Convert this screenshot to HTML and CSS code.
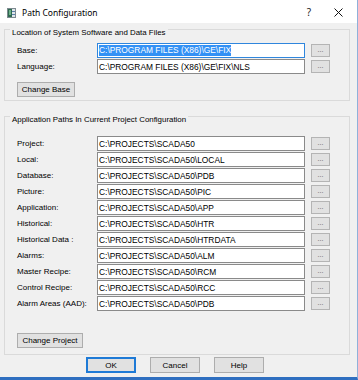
FILE: index.html
```html
<!DOCTYPE html>
<html>
<head>
<meta charset="utf-8">
<link rel="stylesheet" href="styles.css">
</head>
<body>
<div class="window">
  <div class="titlebar">
    <span class="app-icon">
      <svg width="9" height="10" viewBox="0 0 9 10">
        <rect x="0.5" y="0.5" width="8" height="9" fill="#dfe6ea" stroke="#7d8a90"/>
        <rect x="1" y="1" width="4" height="8" fill="#2f6a50"/>
        <rect x="2" y="2" width="2" height="5" fill="#6fb08a"/>
        <rect x="5" y="3" width="3" height="1" fill="#5a7fa8"/>
        <rect x="5" y="6" width="3" height="1" fill="#5a7fa8"/>
      </svg>
    </span>
    <span class="title">Path Configuration</span>
    <span class="tb-help">?</span>
    <span class="tb-close">
      <svg width="9" height="9" viewBox="0 0 9 9">
        <path d="M0.5 0.5 L8.5 8.5 M8.5 0.5 L0.5 8.5" stroke="#111" stroke-width="1" fill="none"/>
      </svg>
    </span>
  </div>
  <div class="body">
    <fieldset class="group group-system">
      <legend>Location of System Software and Data Files</legend>
      <div class="group-content">
        <div class="rows rows-system">
          <div class="row"><span class="lbl">Base:</span><div class="field focus"><span class="sel">C:\PROGRAM FILES (X86)\GE\FIX</span></div><button class="browse">...</button></div>
          <div class="row"><span class="lbl">Language:</span><div class="field">C:\PROGRAM FILES (X86)\GE\FIX\NLS</div><button class="browse">...</button></div>
        </div>
        <button class="btn change-base">Change Base</button>
      </div>
    </fieldset>
    <fieldset class="group group-project">
      <legend>Application Paths In Current Project Configuration</legend>
      <div class="group-content">
        <div class="rows rows-project">
          <div class="row"><span class="lbl">Project:</span><div class="field">C:\PROJECTS\SCADA50</div><button class="browse">...</button></div>
          <div class="row"><span class="lbl">Local:</span><div class="field">C:\PROJECTS\SCADA50\LOCAL</div><button class="browse">...</button></div>
          <div class="row"><span class="lbl">Database:</span><div class="field">C:\PROJECTS\SCADA50\PDB</div><button class="browse">...</button></div>
          <div class="row"><span class="lbl">Picture:</span><div class="field">C:\PROJECTS\SCADA50\PIC</div><button class="browse">...</button></div>
          <div class="row"><span class="lbl">Application:</span><div class="field">C:\PROJECTS\SCADA50\APP</div><button class="browse">...</button></div>
          <div class="row"><span class="lbl">Historical:</span><div class="field">C:\PROJECTS\SCADA50\HTR</div><button class="browse">...</button></div>
          <div class="row"><span class="lbl">Historical Data :</span><div class="field">C:\PROJECTS\SCADA50\HTRDATA</div><button class="browse">...</button></div>
          <div class="row"><span class="lbl">Alarms:</span><div class="field">C:\PROJECTS\SCADA50\ALM</div><button class="browse">...</button></div>
          <div class="row"><span class="lbl">Master Recipe:</span><div class="field">C:\PROJECTS\SCADA50\RCM</div><button class="browse">...</button></div>
          <div class="row"><span class="lbl">Control Recipe:</span><div class="field">C:\PROJECTS\SCADA50\RCC</div><button class="browse">...</button></div>
          <div class="row"><span class="lbl">Alarm Areas (AAD):</span><div class="field">C:\PROJECTS\SCADA50\PDB</div><button class="browse">...</button></div>
        </div>
        <button class="btn change-project">Change Project</button>
      </div>
    </fieldset>
    <div class="actions">
      <button class="btn action default">OK</button>
      <button class="btn action">Cancel</button>
      <button class="btn action">Help</button>
    </div>
  </div>
</div>
</body>
</html>
```

FILE: styles.css
```css
* { box-sizing: border-box; }

html, body {
  margin: 0;
  background: #f0f0f0;
}

body {
  font-family: "Liberation Sans", Arial, sans-serif;
  font-size: 8px;
  color: #000;
}

.window {
  width: 358px;
  height: 380px;
  display: flex;
  flex-direction: column;
  background: #f0f0f0;
  border-right: 1px solid #8fb1da;
  border-bottom: 3px solid #2f6fc0;
  overflow: hidden;
}

.titlebar {
  height: 23px;
  flex: none;
  background: #fff;
  display: flex;
  align-items: center;
  padding-left: 7px;
}

.app-icon {
  display: flex;
  width: 9px;
  height: 10px;
  margin-top: 2px;
}

.title {
  margin-left: 6px;
  font-family: "Noto Sans", "Liberation Sans", sans-serif;
  font-size: 8.5px;
  color: #000;
  margin-top: 1px;
}

.tb-help {
  margin-left: auto;
  font-family: "Noto Sans", sans-serif;
  font-size: 10px;
  color: #222;
  margin-top: 1px;
}

.tb-close {
  display: flex;
  margin-left: 23px;
  margin-right: 14px;
  margin-top: 1px;
}

.body {
  flex: 1;
  display: flex;
  flex-direction: column;
  padding-left: 4px;
}

.group {
  margin: 0;
  width: 346px;
  min-width: 0;
  border: 1px solid #dadada;
  padding: 0 19px 3px 12px;
}

.group-system { margin-top: -3px; }
.group-project { margin-top: 6px; padding-bottom: 6px; }

.group legend {
  padding: 7px 2px 0;
  margin-left: -7px;
  line-height: 11px;
  font-size: 7.9px;
}

.group-content {
  display: flex;
  flex-direction: column;
  align-items: flex-start;
}

.rows {
  display: flex;
  flex-direction: column;
  gap: 1px;
}

.rows-system { margin-top: 5px; }
.rows-project { margin-top: 11px; }

.row {
  display: flex;
  align-items: center;
  height: 15px;
}

.lbl {
  width: 80px;
  white-space: nowrap;
}

.field {
  width: 208px;
  height: 15px;
  border: 1px solid #8a8a8a;
  background: #fff;
  padding-left: 1px;
  display: flex;
  align-items: center;
  font-size: 8.4px;
  white-space: nowrap;
  overflow: hidden;
}

.field.focus { border-color: #2f86dd; }

.sel {
  background: #3391f5;
  color: #fff;
  line-height: 11px;
}

.browse {
  width: 19px;
  height: 13px;
  margin-left: 6px;
  padding: 0 0 2px;
  border: 1px solid #b4b4b4;
  background: #e1e1e1;
  font-family: "Liberation Sans", sans-serif;
  font-size: 7px;
  line-height: 8px;
  color: #555;
}

.btn {
  height: 15px;
  padding: 0;
  background: #e1e1e1;
  border: 1px solid #adadad;
  font-family: "Liberation Sans", Arial, sans-serif;
  font-size: 8px;
  color: #000;
}

.change-base { width: 58px; margin-top: 8px; }
.change-project { width: 66px; margin-top: 22px; }

.actions {
  display: flex;
  gap: 14px;
  padding-left: 82px;
  margin-top: 2px;
}

.action {
  width: 50px;
  height: 16px;
}

.action.default {
  border: 1px solid #1e7ad6;
  box-shadow: inset 0 0 0 1px #1e7ad6;
}
```
